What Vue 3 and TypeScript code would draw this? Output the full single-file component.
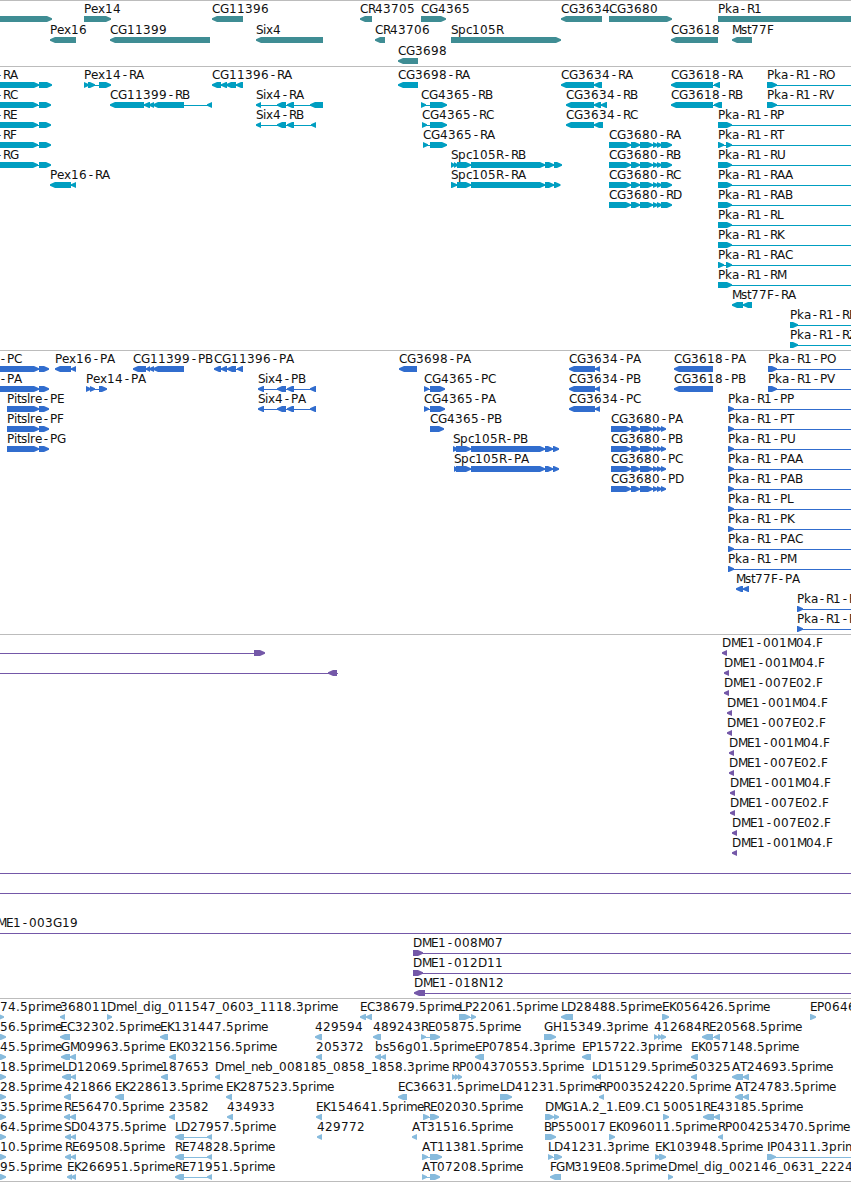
<script setup lang="ts">
type Span = [number, number]
type Dir = 'l' | 'r'

interface Feature {
  row: number
  label: string
  x: number
  dir: Dir
  spans: Span[]
  line: Span | null
}

interface Track {
  id: string
  height: number
  pitch: number
  features: Feature[]
}

const VIEW_WIDTH = 851
const BASELINE = 12
const GLYPH_TOP = 15
const GLYPH_HEIGHT = 6
const HYPHEN_SHIFT = 1.8

const ADVANCE: Record<string, number> = {
  A: 8, B: 7, C: 8, D: 9, E: 7, F: 6, G: 9, H: 9, I: 3, K: 7, L: 6, M: 9, N: 9, O: 9,
  P: 7, R: 7, S: 7, T: 7, U: 8, V: 7, Z: 7,
  a: 7, b: 8, c: 6, d: 8, e: 7, g: 8, i: 3, k: 7, l: 3, m: 11, n: 7, p: 8, r: 5, s: 6,
  t: 4, x: 7, '.': 4, '-': 8, _: 6,
}

function glyphXs(text: string, start: number): string {
  let x = start
  const xs: number[] = []
  for (const ch of text) {
    xs.push(ch === '-' ? x + HYPHEN_SHIFT : x)
    x += ADVANCE[ch] ?? 8
  }
  return xs.join(' ')
}

function f(row: number, label: string, dir: Dir, spans: Span[], x?: number, lineEnd?: number): Feature {
  const first = spans[0]
  const last = spans[spans.length - 1]
  const start = first[0]
  const end = lineEnd ?? last[1]
  const hasLine = spans.length > 1 || lineEnd !== undefined
  return { row, label, x: x ?? start, dir, spans, line: hasLine ? [start + 2, end - (lineEnd === undefined ? 2 : 0)] : null }
}

function bare(row: number, label: string, x: number, line: Span | null, dir: Dir = 'r', spans: Span[] = []): Feature {
  return { row, label, x, dir, spans, line }
}

function shape(span: Span, dir: Dir, top: number): string {
  const [a, b] = span
  const head = Math.min(5, b - a)
  const bottom = top + GLYPH_HEIGHT
  const tipTop = top + 2.2
  const tipBottom = bottom - 2.2
  return dir === 'r'
    ? `${a},${top} ${b - head},${top} ${b},${tipTop} ${b},${tipBottom} ${b - head},${bottom} ${a},${bottom}`
    : `${b},${top} ${a + head},${top} ${a},${tipTop} ${a},${tipBottom} ${a + head},${bottom} ${b},${bottom}`
}

const EDGE = 860

const genes: Feature[] = [
  bare(0, '', 0, null, 'r', [[-10, 52]]),
  f(0, 'Pex14', 'r', [[84, 111]]),
  f(0, 'CG11396', 'l', [[212, 243]]),
  f(0, 'CR43705', 'l', [[360, 372]]),
  f(0, 'CG4365', 'r', [[421, 446]]),
  f(0, 'CG3634', 'l', [[561, 602]]),
  f(0, 'CG3680', 'r', [[609, 672]]),
  f(0, 'Pka-R1', 'r', [[718, 870]]),
  f(1, 'Pex16', 'l', [[50, 76]]),
  f(1, 'CG11399', 'l', [[110, 210]]),
  f(1, 'Six4', 'l', [[256, 323]]),
  f(1, 'CR43706', 'l', [[375, 385]]),
  f(1, 'Spc105R', 'r', [[451, 561]]),
  f(1, 'CG3618', 'l', [[671, 718]]),
  f(1, 'Mst77F', 'l', [[732, 752]]),
  f(2, 'CG3698', 'l', [[398, 418]]),
]

const cg3680r: Span[] = [[609, 631], [631, 640], [640, 653], [653, 658], [657, 662], [661, 672]]

const transcripts: Feature[] = [
  f(0, '-RA', 'r', [[-10, 39], [39, 52]], -5),
  f(0, 'Pex14-RA', 'r', [[84, 89], [88, 95], [99, 111]]),
  f(0, 'CG11396-RA', 'l', [[212, 221], [221, 227], [226, 236], [236, 243]]),
  f(0, 'CG3698-RA', 'l', [[398, 418]]),
  f(0, 'CG3634-RA', 'l', [[561, 594], [594, 602]]),
  f(0, 'CG3618-RA', 'l', [[671, 713], [714, 720]]),
  f(0, 'Pka-R1-RO', 'r', [[767, 777]], 767, EDGE),
  f(1, '-RC', 'r', [[-10, 38], [39, 51]], -5),
  f(1, 'CG11399-RB', 'l', [[110, 144], [144, 150], [149, 154], [153, 184], [207, 212]]),
  f(1, 'Six4-RA', 'l', [[256, 261], [277, 286], [287, 294], [310, 323]]),
  f(1, 'CG4365-RB', 'r', [[421, 426], [430, 447]]),
  f(1, 'CG3634-RB', 'l', [[566, 594], [594, 601], [601, 607]]),
  f(1, 'CG3618-RB', 'l', [[671, 713], [714, 722]]),
  f(1, 'Pka-R1-RV', 'r', [[767, 777]], 767, EDGE),
  f(2, '-RE', 'r', [[-10, 38], [39, 51]], -5),
  f(2, 'Six4-RB', 'l', [[256, 261], [277, 286], [287, 294], [311, 316]]),
  f(2, 'CG4365-RC', 'r', [[422, 427], [430, 447]]),
  f(2, 'CG3634-RC', 'l', [[566, 594], [594, 603]]),
  f(2, 'Pka-R1-RP', 'r', [[718, 732]], 718, EDGE),
  f(3, '-RF', 'r', [[-10, 38], [39, 51]], -5),
  f(3, 'CG4365-RA', 'r', [[423, 428], [430, 447]]),
  f(3, 'CG3680-RA', 'r', cg3680r),
  f(3, 'Pka-R1-RT', 'r', [[718, 724], [726, 732]], 718, EDGE),
  f(4, '-RG', 'r', [[-10, 38], [39, 51]], -5),
  f(4, 'Spc105R-RB', 'r', [[451, 455], [454, 458], [457, 471], [471, 545], [545, 554], [554, 562]]),
  f(4, 'CG3680-RB', 'r', cg3680r),
  f(4, 'Pka-R1-RU', 'r', [[718, 732]], 718, EDGE),
  f(5, 'Pex16-RA', 'l', [[50, 71], [71, 76]]),
  f(5, 'Spc105R-RA', 'r', [[451, 457], [457, 471], [471, 545], [545, 554], [554, 560.5]]),
  f(5, 'CG3680-RC', 'r', cg3680r),
  f(5, 'Pka-R1-RAA', 'r', [[718, 732]], 718, EDGE),
  f(6, 'CG3680-RD', 'r', cg3680r),
  f(6, 'Pka-R1-RAB', 'r', [[718, 732]], 718, EDGE),
  f(7, 'Pka-R1-RL', 'r', [[718, 732]], 718, EDGE),
  f(8, 'Pka-R1-RK', 'r', [[718, 732]], 718, EDGE),
  f(9, 'Pka-R1-RAC', 'r', [[718, 724], [726, 732]], 718, EDGE),
  f(10, 'Pka-R1-RM', 'r', [[718, 732]], 718, EDGE),
  f(11, 'Mst77F-RA', 'l', [[732, 743], [743, 752]]),
  f(12, 'Pka-R1-RF', 'r', [[790, 798]], 790, EDGE),
  f(13, 'Pka-R1-RZ', 'r', [[790, 798]], 790, EDGE),
]

const cg3680p: Span[] = [[611, 631], [631, 640], [640, 653], [653, 658], [657, 662], [661, 666]]
const pitslre: Span[] = [[7, 39], [39, 49]]
const six4p: Span[] = [[258, 264], [277, 286], [287, 294], [310, 316]]
const pka: Span[] = [[728, 734]]

const proteins: Feature[] = [
  f(0, '-PC', 'r', [[-10, 39], [39, 49]], -1),
  f(0, 'Pex16-PA', 'l', [[55, 71], [71, 76]]),
  f(0, 'CG11399-PB', 'l', [[133, 146], [146, 150], [149, 154], [153, 184]]),
  f(0, 'CG11396-PA', 'l', [[214, 221], [221, 227], [227, 236], [237, 243]]),
  f(0, 'CG3698-PA', 'l', [[399, 417]]),
  f(0, 'CG3634-PA', 'l', [[569, 595], [595, 600]]),
  f(0, 'CG3618-PA', 'l', [[674, 713]]),
  f(0, 'Pka-R1-PO', 'r', [[768, 777]], 768, EDGE),
  f(1, '-PA', 'r', [[-10, 39], [39, 49]], -1),
  f(1, 'Pex14-PA', 'r', [[86, 91], [90, 95], [99, 107]]),
  f(1, 'Six4-PB', 'l', six4p),
  f(1, 'CG4365-PC', 'r', [[424, 429], [430, 445]]),
  f(1, 'CG3634-PB', 'l', [[569, 595], [595, 600]]),
  f(1, 'CG3618-PB', 'l', [[674, 713]]),
  f(1, 'Pka-R1-PV', 'r', [[768, 777]], 768, EDGE),
  f(2, 'Pitslre-PE', 'r', pitslre),
  f(2, 'Six4-PA', 'l', six4p),
  f(2, 'CG4365-PA', 'r', [[424, 429], [430, 445]]),
  f(2, 'CG3634-PC', 'l', [[569, 595], [595, 600]]),
  f(2, 'Pka-R1-PP', 'r', pka, 728, EDGE),
  f(3, 'Pitslre-PF', 'r', pitslre),
  f(3, 'CG4365-PB', 'r', [[430, 444]]),
  f(3, 'CG3680-PA', 'r', cg3680p),
  f(3, 'Pka-R1-PT', 'r', pka, 728, EDGE),
  f(4, 'Pitslre-PG', 'r', pitslre),
  f(4, 'Spc105R-PB', 'r', [[453, 458], [456, 471], [471, 545], [545, 553], [553, 559]]),
  f(4, 'CG3680-PB', 'r', cg3680p),
  f(4, 'Pka-R1-PU', 'r', pka, 728, EDGE),
  f(5, 'Spc105R-PA', 'r', [[454, 458], [456, 471], [471, 545], [545, 553], [553, 559]]),
  f(5, 'CG3680-PC', 'r', cg3680p),
  f(5, 'Pka-R1-PAA', 'r', pka, 728, EDGE),
  f(6, 'CG3680-PD', 'r', cg3680p),
  f(6, 'Pka-R1-PAB', 'r', pka, 728, EDGE),
  f(7, 'Pka-R1-PL', 'r', pka, 728, EDGE),
  f(8, 'Pka-R1-PK', 'r', pka, 728, EDGE),
  f(9, 'Pka-R1-PAC', 'r', pka, 728, EDGE),
  f(10, 'Pka-R1-PM', 'r', pka, 728, EDGE),
  f(11, 'Mst77F-PA', 'l', [[736, 743], [743, 749]]),
  f(12, 'Pka-R1-P', 'r', [[797, 803]], 797, EDGE),
  f(13, 'Pka-R1-P', 'r', [[797, 803]], 797, EDGE),
]

const cloneEnds: [string, number][] = [
  ['DME1-001M04.F', 722], ['DME1-001M04.F', 724], ['DME1-007E02.F', 724],
  ['DME1-001M04.F', 727], ['DME1-007E02.F', 727], ['DME1-001M04.F', 729],
  ['DME1-007E02.F', 729], ['DME1-001M04.F', 730], ['DME1-007E02.F', 730],
  ['DME1-007E02.F', 732], ['DME1-001M04.F', 732],
]

const clones: Feature[] = [
  bare(0, '', 0, [-10, 256], 'r', [[254, 265]]),
  bare(1, '', 0, [-10, 338], 'l', [[328, 337]]),
  ...cloneEnds.map(([label, x], row) => f(row, label, 'l', [[x, x + 5]])),
  bare(11, '', 0, [-10, EDGE]),
  bare(12, '', 0, [-10, EDGE]),
  bare(14, 'ME1-003G19', -3, [-10, EDGE]),
  f(15, 'DME1-008M07', 'r', [[413, 423]], 413, EDGE),
  f(16, 'DME1-012D11', 'r', [[413, 423]], 413, EDGE),
  f(17, 'DME1-018N12', 'l', [[414, 425]], 414, EDGE),
]

const edgeReads = ['74', '56', '45', '18', '28', '35', '64', '10', '95']

const ests: Feature[] = [
  ...edgeReads.map((n, row) => f(row, `${n}.5prime`, 'r', [[-6, row === 0 ? 4 : 6]], 0)),
  f(0, '368011', 'l', [[60, 65]]),
  f(0, 'Dmel_dig_011547_0603_1118.3prime', 'r', [[107, 112]]),
  f(0, 'EC38679.5prime', 'l', [[360, 366], [366, 372]]),
  f(0, 'LP22061.5prime', 'r', [[459, 470], [471, 476]]),
  f(0, 'LD28488.5prime', 'l', [[561, 573]]),
  f(0, 'EK056426.5prime', 'r', [[662, 669]]),
  f(0, 'EP0646', 'r', [[810, 816]]),
  f(1, 'EC32302.5prime', 'l', [[60, 70]]),
  f(1, 'EK131447.5prime', 'l', [[160, 168]]),
  f(1, '429594', 'l', [[315, 322]]),
  f(1, '489243', 'l', [[373, 381]]),
  f(1, 'RE05875.5prime', 'r', [[421, 426], [430, 440]]),
  f(1, 'GH15349.3prime', 'r', [[544, 556]]),
  f(1, '412684', 'r', [[654, 658], [658, 662], [661, 666]]),
  f(1, 'RE20568.5prime', 'l', [[702, 713], [714, 720]]),
  f(2, 'GM09963.5prime', 'l', [[61, 70], [70, 76]]),
  f(2, 'EK032156.5prime', 'l', [[169, 176]]),
  f(2, '205372', 'l', [[316, 322]]),
  f(2, 'bs56g01.5prime', 'l', [[375, 381], [381, 386]]),
  f(2, 'EP07854.3prime', 'l', [[475, 484]]),
  f(2, 'EP15722.3prime', 'l', [[582, 591]]),
  f(2, 'EK057148.5prime', 'l', [[691, 698]]),
  f(3, 'LD12069.5prime', 'l', [[62, 71], [71, 76]]),
  f(3, '187653', 'l', [[161, 168]]),
  f(3, 'Dmel_neb_008185_0858_1858.3prime', 'l', [[215, 220]]),
  f(3, 'RP004370553.5prime', 'r', [[452, 456], [455, 459], [458, 462]]),
  f(3, 'LD15129.5prime', 'l', [[592, 597], [596, 601]]),
  f(3, '50325', 'l', [[691, 697]]),
  f(3, 'AT24693.5prime', 'l', [[732, 743], [743, 749]]),
  f(4, '421866', 'l', [[64, 71]]),
  f(4, 'EK228613.5prime', 'l', [[115, 124]]),
  f(4, 'EK287523.5prime', 'l', [[226, 232]]),
  f(4, 'EC36631.5prime', 'l', [[398, 407]]),
  f(4, 'LD41231.5prime', 'r', [[500, 512]]),
  f(4, 'RP003524220.5prime', 'l', [[599, 604]]),
  f(4, 'AT24783.5prime', 'l', [[735, 743], [743, 749]]),
  f(5, 'RE56470.5prime', 'l', [[64, 70], [70, 76]]),
  f(5, '23582', 'l', [[169, 175]]),
  f(5, '434933', 'l', [[227, 233]]),
  f(5, 'EK154641.5prime', 'l', [[316, 322]]),
  f(5, 'RE02030.5prime', 'r', [[423, 429], [430, 439]]),
  f(5, 'DMG1A.2_1.E09.C1', 'r', [[545, 554], [554, 559]]),
  f(5, '50051', 'r', [[663, 669]]),
  f(5, 'RE43185.5prime', 'l', [[703, 714], [714, 720]]),
  f(6, 'SD04375.5prime', 'l', [[65, 71], [71, 76]], 64),
  f(6, 'LD27957.5prime', 'l', [[175, 184], [207, 212]]),
  f(6, '429772', 'l', [[317, 322]]),
  f(6, 'AT31516.5prime', 'l', [[412, 417]]),
  f(6, 'BP550017', 'r', [[545, 556]], 544),
  f(6, 'EK096011.5prime', 'r', [[609, 615]]),
  f(6, 'RP004253470.5prime', 'l', [[718, 723]]),
  f(7, 'RE69508.5prime', 'l', [[65, 71], [71, 76]]),
  f(7, 'RE74828.5prime', 'l', [[175, 184], [207, 212]]),
  f(7, 'AT11381.5prime', 'r', [[422, 428], [430, 442]]),
  f(7, 'LD41231.3prime', 'r', [[548, 553], [554, 562]]),
  f(7, 'EK103948.5prime', 'r', [[655, 660], [659, 666]]),
  f(7, 'IP04311.3prime', 'r', [[767, 776]], 767, EDGE),
  f(8, 'EK266951.5prime', 'l', [[67, 72], [71, 76]]),
  f(8, 'RE71951.5prime', 'l', [[175, 184], [207, 212]]),
  f(8, 'AT07208.5prime', 'r', [[422, 427], [430, 440]]),
  f(8, 'FGM319E08.5prime', 'l', [[550, 561]]),
  f(8, 'Dmel_dig_002146_0631_2224', 'r', [[668, 673]]),
]

const tracks: Track[] = [
  { id: 'genes', height: 65, pitch: 21, features: genes },
  { id: 'transcripts', height: 283, pitch: 20, features: transcripts },
  { id: 'proteins', height: 283, pitch: 20, features: proteins },
  { id: 'clones', height: 363, pitch: 20, features: clones },
  { id: 'ests', height: 182, pitch: 20, features: ests },
]
</script>

<template>
  <main class="browser">
    <section v-for="track in tracks" :key="track.id" class="track" :class="track.id">
      <svg class="canvas" :width="VIEW_WIDTH" :height="track.height">
        <g
          v-for="(feat, i) in track.features"
          :key="i"
          :transform="`translate(0 ${feat.row * track.pitch})`"
        >
          <rect
            v-if="feat.line"
            class="glyph"
            :x="feat.line[0]"
            :y="GLYPH_TOP + 3"
            :width="feat.line[1] - feat.line[0]"
            height="1"
          />
          <polygon
            v-for="(span, j) in feat.spans"
            :key="j"
            class="glyph"
            :points="shape(span, feat.dir, GLYPH_TOP)"
          />
          <text v-if="feat.label" class="label" :x="glyphXs(feat.label, feat.x)" :y="BASELINE">{{ feat.label }}</text>
        </g>
      </svg>
    </section>
  </main>
</template>

<style>
body {
  margin: 0;
  background: #fff;
}
</style>

<style scoped>
.browser {
  width: 851px;
  height: 1182px;
  overflow: hidden;
  background: #fff;
}

.track {
  border-top: 1px solid #bcbcbc;
}

.track.ests {
  border-bottom: 1px solid #bcbcbc;
}

.canvas {
  display: block;
  overflow: hidden;
}

.track.genes .glyph { fill: #3f8d94; }
.track.transcripts .glyph { fill: #009ec1; }
.track.proteins .glyph { fill: #316dce; }
.track.clones .glyph { fill: #7458a8; }
.track.ests .glyph { fill: #87bbdd; }

.label {
  font-family: "DejaVu Sans", "Liberation Sans", sans-serif;
  font-size: 12px;
  fill: #111;
}
</style>
